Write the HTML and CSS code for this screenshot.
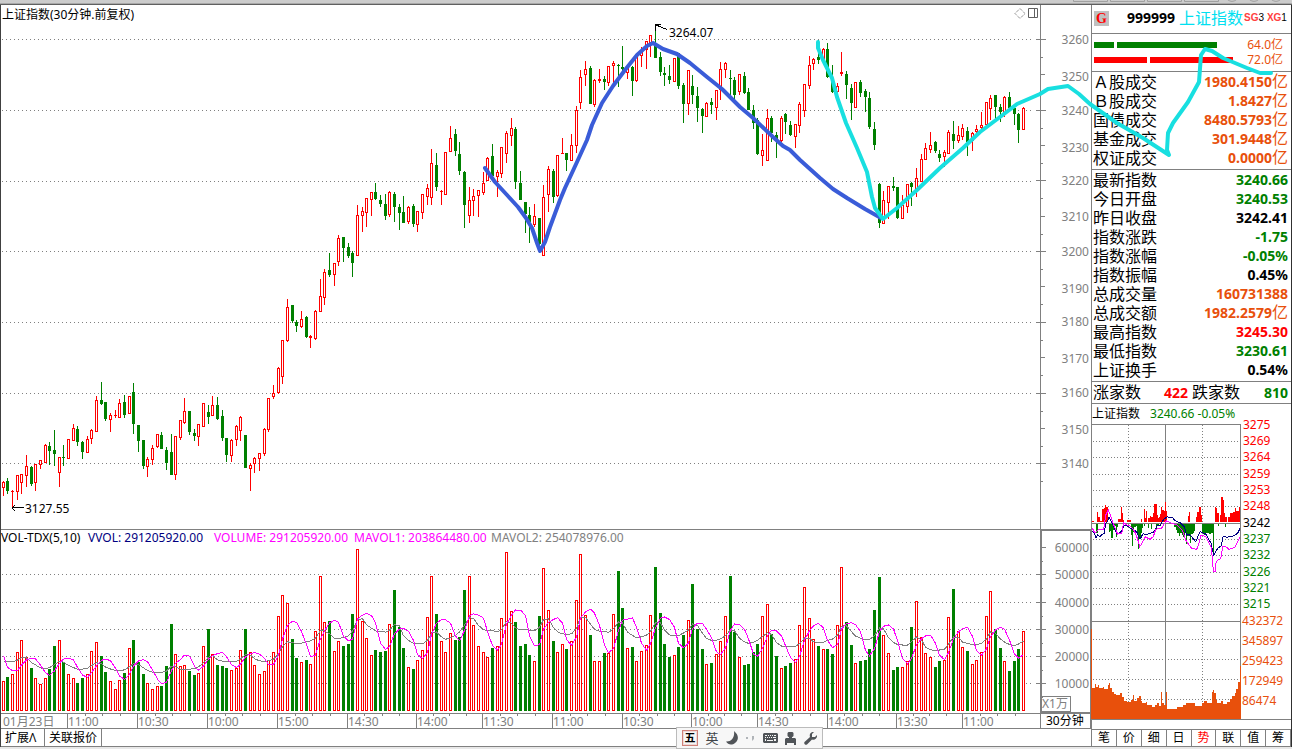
FILE: index.html
```html
<!DOCTYPE html>
<html lang="zh-CN">
<head>
<meta charset="utf-8">
<title>上证指数 30分钟</title>
<link rel="stylesheet" href="styles.css">
</head>
<body>
<div class="strip"></div>
<div class="app">
  <main class="main">
    <section class="panel">
      <svg class="chart" id="price" viewBox="1 5 1090 525"></svg>
      <header class="panel-head">
        <h1 class="title">上证指数(30分钟.前复权)</h1>
        <svg class="tools" viewBox="0 0 28 12"><path d="M1 6.500l5-5 5 5-5 5z" stroke-dasharray="1 1"/><path d="M14.500 1.500h9v9h-9zM20.500 1.500v9"/></svg>
      </header>
    </section>
    <section class="panel">
      <svg class="chart" id="volume" viewBox="1 530 1090 199"></svg>
      <div class="legend">
        <span>VOL-TDX(5,10)</span><span class="navy">VVOL: 291205920.00</span><span class="pink">VOLUME: 291205920.00</span><span class="pink">MAVOL1: 203864480.00</span><span class="gray">MAVOL2: 254078976.00</span>
      </div>
    </section>
    <footer class="foot"><button type="button">扩展Λ</button><button type="button">关联报价</button></footer>
  </main>
  <aside class="side">
    <div class="code"><span class="g">G</span><b class="num">999999</b><span class="name">上证指数</span><span class="tags"><b>SG</b>3 <b>XG</b>1</span></div>
    <div class="flow">
      <div class="flow-row"><span class="bar buy"></span><span class="bar buy long"></span><span class="amount">64.0亿</span></div>
      <div class="flow-row"><span class="bar sell"></span><span class="bar sell long"></span><span class="amount">72.0亿</span></div>
    </div>
    <table class="quotes">
      <tr><th scope="row">Ａ股成交</th><td class="orange">1980.4150<span>亿</span></td></tr>
      <tr><th scope="row">Ｂ股成交</th><td class="orange">1.8427<span>亿</span></td></tr>
      <tr><th scope="row">国债成交</th><td class="orange">8480.5793<span>亿</span></td></tr>
      <tr><th scope="row">基金成交</th><td class="orange">301.9448<span>亿</span></td></tr>
      <tr><th scope="row">权证成交</th><td class="orange">0.0000<span>亿</span></td></tr>
    </table>
    <table class="quotes">
      <tr><th scope="row">最新指数</th><td class="green">3240.66</td></tr>
      <tr><th scope="row">今日开盘</th><td class="green">3240.53</td></tr>
      <tr><th scope="row">昨日收盘</th><td>3242.41</td></tr>
      <tr><th scope="row">指数涨跌</th><td class="green">-1.75</td></tr>
      <tr><th scope="row">指数涨幅</th><td class="green">-0.05%</td></tr>
      <tr><th scope="row">指数振幅</th><td>0.45%</td></tr>
      <tr><th scope="row">总成交量</th><td class="orange">160731388</td></tr>
      <tr><th scope="row">总成交额</th><td class="orange">1982.2579<span>亿</span></td></tr>
      <tr><th scope="row">最高指数</th><td class="red">3245.30</td></tr>
      <tr><th scope="row">最低指数</th><td class="green">3230.61</td></tr>
      <tr><th scope="row">上证换手</th><td>0.54%</td></tr>
    </table>
    <div class="breadth"><span>涨家数</span><b class="red">422</b><span>跌家数</span><b class="green">810</b></div>
    <div class="mini-head"><span>上证指数</span><span class="green">3240.66 -0.05%</span></div>
    <svg class="chart" id="mini" viewBox="1092 424 199 296"></svg>
    <nav class="tabs"><button type="button">笔</button><button type="button">价</button><button type="button">细</button><button type="button">日</button><button type="button" class="red">势</button><button type="button">联</button><button type="button">值</button><button type="button">筹</button></nav>
  </aside>
  <div class="ime">
    <span class="wubi">五</span><span class="ying">英</span>
    <svg width="12" height="14" viewBox="0 0 12 14"><path d="M8 0C13 4 13 9 9 12 6 14.500 2 14 0 10.500 5 11 9 7 8 0z"/></svg>
    <svg width="10" height="8" viewBox="0 0 10 8"><path class="dim" d="M1 3h2v2H1zM7 2h2v3L7 7z"/></svg>
    <svg width="15" height="10" viewBox="0 0 15 10"><path fill-rule="evenodd" d="M1 0h13l1 1v8l-1 1H1L0 9V1zM2 2v1h2V2zm3 0v1h1V2zm2 0v1h1V2zm2 0v1h1V2zm2 0v1h2V2zM2 4v1h1V4zm2 0v1h1V4zm2 0v1h1V4zm2 0v1h1V4zm2 0v1h3V4zM2 6v2h1V6zm2 1v1h6V7zm7-1v2h2V6z"/></svg>
    <svg width="11" height="13" viewBox="0 0 11 13"><path d="M3.500 0h4l1 1v3l-1 1H7v1h3l1 1v6H9v-2H2v2H0V7l1-1h3V5h-.5l-1-1V1z"/></svg>
    <svg width="13" height="13" viewBox="0 0 13 13"><path d="M10 0L8 2v3h3l2-2c.5 3-2 5.500-5 4.500L3 12.500C1.500 13.500-.5 12 .5 10L6 5C5 2 7-.5 10 0z"/></svg>
  </div>
  <svg class="ink" viewBox="0 0 1292 749" preserveAspectRatio="none">
    <path class="cap" d="M1073.500 0v1.500h34V0M1110.500 0v1.500h34V0M1147.500 0v1.500h34V0M1184.500 0v1.500h34V0M1228 0q4 3 8 0M1250 0q4 3 8 0M1272 0q4 3 8 0"/>
    <path class="blue" d="M485 168L495 182 507 195 518 207 526 218 532 228 537 243 540 251 545 242 550 227 560 200 565 188 577 162 587 140 592 125 602 103 613 86 625 70 637 55 647 46 653 43 663 49 677 54 690 63 707 77 722 89 740 107 753 118 773 137 783 146 790 150 800 160 810 169 820 178 833 189 847 198 865 209 881 218"/>
    <path class="cyan" d="M818 42V48L823 60 832 78 837 97 846 123 857 148 867 172 872 197 875 208 883 219 897 208 917 190 940 168 963 148 980 132 1000 117 1017 104 1040 94 1048 89 1068 86 1079 94 1090 104 1117 123 1143 138 1169 155 1167 150 1168 133 1173 123 1188 102 1199 82 1201 55 1205 49 1212 51 1223 58 1247 68 1260 73H1271"/>
  </svg>
</div>
<script src="chart.js"></script>
</body>
</html>
```
FILE: styles.css
```css
* { box-sizing: border-box; }
body {
  margin: 0;
  background: #e8e8e8;
  color: #000;
  font: 12px/16px "Noto Sans", "Noto Sans CJK SC", sans-serif;
}
button {
  margin: 0;
  padding: 0;
  border: 0;
  background: #fff;
  color: #000;
  font: 12px/16px "Noto Sans", "Noto Sans CJK SC", sans-serif;
}
.strip { height: 5px; background: #ccc; border-bottom: 1px solid #606060; box-shadow: inset 0 -1px #a8a8a8; }
.app { display: flex; background: #fff; }
.main { flex: 1; min-width: 0; border-left: 1px solid #404040; }
.panel { display: grid; }
.panel > * { grid-area: 1 / 1; }
.chart { display: block; width: 100%; height: auto; shape-rendering: crispEdges; }
.chart text { font-size: 12px; fill: #808080; }
.chart .end { text-anchor: end; }
.panel-head { display: flex; justify-content: space-between; align-items: start; height: 20px; padding: 2px 49px 0 1px; }
.title { margin: 0; font-size: 12px; font-weight: 400; }
.tools { width: 28px; height: 12px; fill: none; stroke: #606060; }
.legend { display: grid; grid-template-columns: 87px 126px 140px 137px auto; height: 16px; white-space: nowrap; }
.foot { display: flex; height: 18px; border-bottom: 1px solid #808080; }
.foot button { padding: 0 4px; border-right: 1px solid #808080; }
.foot button:first-child { width: 44px; text-align: left; }
.line { fill: none; stroke: #808080; }
.dots { fill: none; stroke: #808080; stroke-dasharray: 1 3; }
.mini-dots { fill: none; stroke: #808080; stroke-dasharray: 1 2; }
.up { fill: #fff; stroke: #f00; }
.down { fill: none; stroke: #008000; }
.down-fill { fill: #008000; }
.up-fill { fill: #f00; }
.sell-area { fill: #e8500c; }
.ma { fill: none; stroke-width: 1; }
.ma-fast { stroke: #f0f; }
.ma-slow { stroke: #808080; }
.ma-navy { stroke: #000080; }
.arrow { fill: none; stroke: #000; }
.chart .ink-text { fill: #000; }
.chart .t-red { fill: #f00; }
.chart .t-green { fill: #008000; }
.chart .t-orange { fill: #e8500c; }

.side { width: 201px; border: solid #808080; border-width: 0 1px; border-right-color: #303030; }
.code, .flow, .quotes, .breadth { border-bottom: 1px solid #808080; }
.code { display: flex; align-items: center; height: 29px; padding: 0 2px 2px; white-space: nowrap; }
.g { width: 15px; height: 15px; margin-right: 18px; background: #c0c0c0; color: #f00; font: bold 14px/15px "Liberation Serif", serif; text-align: center; }
.num { font-size: 14px; }
.name { margin-left: 4px; color: #00e0f0; font-size: 16px; }
.tags { margin-left: 1px; font: 10px/16px "Liberation Sans", sans-serif; }
.tags b { color: #ff4040; }
.flow { height: 38px; padding: 3px 8px 0 2px; }
.flow-row { display: flex; align-items: center; gap: 3px; height: 15px; }
.bar { width: 20px; height: 6px; background: #008000; }
.bar.long { width: 100px; }
.bar.sell { width: 53px; background: #f00; }
.bar.sell.long { width: 83px; }
.amount { margin-left: auto; color: #e8500c; }
.quotes { width: 100%; border-collapse: separate; border-spacing: 0; padding: 1px 3px 1px 1px; }
.quotes th, .quotes td { height: 19px; padding: 0; line-height: 18px; white-space: nowrap; vertical-align: top; }
.quotes th { font-size: 16px; font-weight: 400; text-align: left; }
.quotes td { font-size: 14px; font-weight: 700; text-align: right; }
.quotes td span { font-size: 16px; font-weight: 400; line-height: 16px; }
.breadth { display: grid; grid-template-columns: 48px 43px 1fr auto; column-gap: 4px; height: 22px; padding: 0 3px 0 1px; font-size: 16px; line-height: 21px; }
.breadth b { font-size: 14px; text-align: right; }
.mini-head { display: flex; gap: 10px; height: 20px; padding-left: 0; line-height: 20px; white-space: nowrap; }
.tabs { display: grid; grid-template-columns: repeat(8, 1fr); height: 18px; margin-top: 9px; border: solid #808080; border-width: 1px 0; }
.tabs button { border-right: 1px solid #808080; font-size: 12px; }
.green { color: #008000; }
.red, .tabs .red { color: #f00; }
.orange { color: #e8500c; }
.navy { color: #000080; }
.pink { color: #f0f; }
.gray { color: #808080; }

.ime {
  position: absolute; left: 676px; top: 727px;
  display: flex; align-items: center; justify-content: space-between;
  width: 147px; height: 22px; padding: 0 5px;
  background: #f7f7f7; border: 1px solid #bbb; fill: #505458;
}
.ime .dim { fill: #b0b4b8; }
.wubi { width: 16px; height: 16px; border: 1px solid #d08078; box-shadow: inset 0 0 0 1px #eedad8; font-size: 11px; font-weight: 700; line-height: 14px; text-align: center; }
.ying { color: #404448; font-size: 13px; }
.ink { position: absolute; left: 0; top: 0; width: 100%; height: 749px; fill: none; stroke-linecap: round; stroke-linejoin: round; pointer-events: none; }
.blue { stroke: #3a5cd8; stroke-width: 4; }
.cyan { stroke: #18dfe0; stroke-width: 4; }
.cap { stroke: #a0a0a0; }
```
FILE: chart.js
```js
// One bar per entry: direction, high, body top, body bottom, low, volume.
const BARS = `r 481 482 488 496 89,g 478 481 491 494 101,r 490 491 492 507 112,r 475 475 492 500 176,r 474 474 483 494 214,r 455 466 476 487 163,g 466 467 484 486 128,r 464 464 483 491 100,r 460 460 465 469 82,r 444 445 463 463 100,
g 442 446 451 465 125,g 430 450 454 466 194,r 457 457 473 487 214,g 445 457 458 466 146,r 439 439 459 459 112,r 424 428 441 441 100,g 426 429 442 446 83,g 441 442 452 459 98,r 436 439 453 453 112,r 429 430 439 444 181,
r 396 400 432 432 206,g 382 400 404 405 164,g 402 402 419 421 116,r 413 415 420 432 89,r 410 415 416 418 65,r 399 403 418 418 92,g 395 402 415 418 113,r 396 396 414 414 190,g 383 392 424 434 212,g 425 425 441 452 146,
g 440 440 466 469 110,r 457 459 467 477 83,r 445 448 460 465 65,r 434 434 447 448 74,g 432 435 449 449 74,g 447 450 463 470 134,g 434 452 475 475 260,r 436 436 475 480 172,r 420 420 438 440 134,r 398 411 423 424 139,
g 411 411 432 435 119,g 429 433 436 441 107,r 424 424 437 446 113,r 403 403 427 427 194,g 405 412 417 424 245,r 396 405 416 416 172,g 397 405 419 420 137,g 410 416 438 441 134,g 438 438 455 462 128,r 439 440 456 462 124,
r 425 426 440 446 130,r 416 417 431 441 184,g 435 435 468 468 245,r 463 465 469 491 178,r 457 458 464 473 137,r 453 453 459 471 110,r 428 429 454 456 119,r 398 398 430 432 154,r 385 393 397 399 176,r 367 368 393 394 284,
r 340 340 377 384 349,r 299 307 341 342 323,g 305 305 321 323 215,g 320 322 326 332 158,r 311 319 327 328 148,g 316 317 337 338 152,r 335 336 338 348 142,r 310 311 339 340 239,r 279 296 312 312 404,r 269 272 298 305 266,
g 253 270 275 277 269,r 263 263 275 286 181,r 235 238 262 266 211,g 237 237 248 262 194,g 243 247 256 258 200,g 251 253 263 277 290,r 205 215 256 256 485,r 207 211 216 232 269,r 198 198 213 227 220,r 192 192 200 216 169,
g 183 192 199 200 182,g 195 200 204 207 176,g 194 204 216 220 179,r 191 192 215 217 260,g 192 194 207 222 362,g 204 207 213 230 251,g 196 212 223 223 188,r 206 207 222 224 133,g 204 206 224 227 125,r 211 211 225 232 154,
r 194 194 213 219 184,r 184 188 197 205 281,r 149 163 198 205 406,g 153 165 187 191 290,r 190 191 192 205 211,r 152 152 195 195 178,r 126 138 152 152 233,g 129 134 151 156 212,g 142 154 171 175 221,g 171 172 205 228 362,
r 187 200 216 223 404,r 189 196 201 216 257,r 190 190 196 217 194,r 172 183 193 195 176,r 157 158 181 181 163,g 144 156 176 176 188,r 170 172 177 197 196,r 147 147 174 178 278,r 131 133 154 163 476,r 118 128 136 146 299,
g 127 129 182 189 266,g 171 183 200 200 194,g 202 202 214 233 200,g 207 215 222 243 167,r 204 216 225 227 149,g 218 218 244 253 284,r 185 197 256 256 428,r 166 169 195 212 302,g 169 171 197 203 209,r 155 155 196 197 178,
r 138 153 154 154 202,g 153 153 160 171 185,r 134 145 161 161 209,r 106 110 146 153 334,r 70 77 103 109 470,r 61 69 75 86 287,g 66 68 104 104 227,r 79 80 105 107 149,r 69 79 81 83 151,g 76 79 82 90 173,
r 66 66 83 86 173,r 61 63 66 86 290,g 64 65 66 87 419,g 46 67 69 72 308,r 66 68 73 79 188,g 66 67 81 96 191,r 54 55 81 82 151,r 47 50 56 67 181,r 41 41 50 69 199,r 35 35 43 57 287,
g 24 45 58 58 431,g 52 57 72 76 293,g 67 73 75 86 200,g 65 76 80 84 161,r 58 58 82 82 169,g 53 53 86 89 191,g 83 85 104 123 227,r 70 70 104 115 273,g 75 86 95 104 381,g 87 96 108 122 246,
g 108 109 116 133 186,r 102 103 117 117 140,g 98 102 105 114 144,r 90 90 108 120 170,r 62 69 90 100 209,r 62 63 70 78 284,g 70 78 79 96 405,g 77 80 95 100 237,r 74 74 92 95 161,g 72 76 93 94 138,
g 88 92 110 110 141,g 105 110 123 129 177,g 118 120 154 155 201,r 134 150 156 166 284,r 109 118 161 161 320,g 116 118 133 142 231,g 132 135 140 158 165,r 116 118 141 142 128,g 113 114 122 134 135,g 121 125 135 136 144,
r 124 124 137 148 155,r 102 104 126 133 257,r 84 84 111 117 371,r 56 65 86 89 278,r 58 59 64 70 215,g 40 57 60 64 195,r 48 49 62 62 185,g 43 49 77 78 186,g 65 78 92 93 171,r 83 86 92 97 257,
r 52 72 74 76 431,g 71 74 85 99 267,g 84 88 103 120 198,r 82 82 108 108 143,g 80 82 93 97 150,g 89 91 97 112 153,g 92 98 127 129 186,g 122 129 145 150 303,g 183 184 223 228 402,r 191 200 224 224 227,
r 186 186 203 219 173,g 177 186 188 191 123,g 187 187 218 219 132,r 195 205 219 219 131,r 184 184 207 213 149,g 182 183 187 206 252,r 168 178 189 197 329,r 154 159 182 182 222,r 143 148 160 160 173,r 132 145 150 153 161,
g 141 142 151 153 132,g 150 154 158 162 150,r 150 152 157 167 153,r 130 132 154 154 281,g 121 134 141 149 366,r 126 135 141 143 240,r 124 128 137 140 191,g 127 131 142 156 180,r 132 133 141 151 140,r 125 129 132 133 152,
r 112 125 128 129 176,r 102 102 125 127 284,r 95 98 109 120 359,g 95 95 107 120 246,g 104 107 112 122 189,r 96 97 114 117 149,g 92 97 108 110 120,g 106 108 114 125 150,g 113 114 130 143 186,r 107 108 130 130 240`
  .split(",").map(row => {
    const [dir, ...n] = row.trim().split(" ");
    const [high, top, bottom, low, vol] = n.map(Number);
    return { up: dir === "r", high, top, bottom, low, vol };
  });
// Volumes just before the first visible bar, so the averages start complete.
const LEAD = [101, 112, 130, 140, 167, 275, 165, 172, 129];
const VOL_BASE = 711;
const VOL_UNITS = 3;
const barX = i => Math.floor(3.3 + i * 4.6585);

const path = (cls, d) => `<path class="${cls}" d="${d}"/>`;
const text = (x, y, s, cls = "") => `<text x="${x}" y="${y}" class="${cls}">${s}</text>`;

function box(x, top, bottom, up) {
  if (bottom - top < 2) return `M${x - 1} ${top + 0.5}h3`;
  return up ? `M${x - 0.5} ${top + 0.5}h2v${bottom - top - 1}h-2z` : `M${x - 1} ${top}h3v${bottom - top}h-3z`;
}

function drawPrice() {
  let out = "", up = "", down = "", wick = "", fill = "";
  for (const y of [39, 110, 181, 251, 322, 393, 463]) out += path("dots", `M2 ${y + 0.5}H1034`);
  BARS.forEach((b, i) => {
    const x = barX(i), c = x + 0.5;
    let w = "";
    if (b.high < b.top) w += `M${c} ${b.high}V${b.top}`;
    if (b.low > b.bottom) w += `M${c} ${b.bottom}V${b.low}`;
    if (b.up) up += w + box(x, b.top, b.bottom, true);
    else {
      wick += w;
      if (b.bottom - b.top < 2) down += box(x, b.top, b.bottom, false);
      else fill += box(x, b.top, b.bottom, false);
    }
  });
  out += path("up", up) + path("down", wick + down) + path("down-fill", fill);
  let axis = "M1040.5 5V530M1 529.5H1091";
  for (let k = 0; k < 13; k++) {
    const y = Math.round(39 + k * 35.35) + 0.5;
    axis += k % 2 ? `M1041 ${y}h4` : `M1036 ${y}h10`;
    axis += `M1041 ${y + 18}h2`;
  }
  out += path("line", axis);
  [40, 77, 111, 148, 181, 217, 252, 289, 322, 359, 393, 430, 464].forEach((y, k) => {
    out += text(1089, y + 4, 3260 - k * 10, "end");
  });
  out += text(25, 513, "3127.55", "ink-text") + text(669, 37, "3264.07", "ink-text");
  out += path("arrow", "M12 507.5H24M15 505L12 508 15 511M656 25L667 29.5M655.500 31V24.500H661");
  document.getElementById("price").innerHTML = out;
}

function average(n) {
  const all = LEAD.concat(BARS.map(b => b.vol));
  return BARS.map((b, i) => {
    const end = i + LEAD.length + 1;
    const mean = all.slice(end - n, end).reduce((s, v) => s + v, 0) / n;
    return `${i ? "L" : "M"}${barX(i) + 0.5} ${(VOL_BASE - mean / VOL_UNITS).toFixed(1)}`;
  }).join("");
}

function drawVolume() {
  let out = "", up = "", fill = "";
  for (const y of [574, 602, 629, 656, 683]) out += path("dots", `M2 ${y + 0.5}H1034`);
  BARS.forEach((b, i) => {
    const top = VOL_BASE - Math.round(b.vol / VOL_UNITS);
    if (b.up) up += box(barX(i), top, VOL_BASE, true);
    else fill += box(barX(i), top, VOL_BASE, false);
  });
  out += path("up", up) + path("down-fill", fill);
  out += path("ma ma-slow", average(10)) + path("ma ma-fast", average(5));
  let axis = "M1 713.5H1091M1 728.5H1091M1040.5 530V728M1041.5 530V713M1041 530.5H1091M1041 712.5H1091M1090.5 530V728M1041.5 696.5H1070.5V711.5H1041.5";
  [547, 574, 602, 629, 656, 683].forEach((y, k) => {
    axis += k ? `M1036 ${y + 0.5}h10` : `M1041 ${y + 0.5}h5`;
    axis += `M1041 ${y + 14.5}h2`;
    out += text(1089, y + 5, 60000 - k * 10000, "end");
  });
  const times = [[67, "11:00"], [137, "10:30"], [207, "10:00"], [277, "15:00"], [347, "14:30"], [416, "14:00"], [482, "11:30"],
    [552, "11:00"], [622, "10:30"], [691, "10:00"], [757, "14:30"], [827, "14:00"], [896, "13:30"], [962, "11:00"]];
  times.forEach(([x, label], k) => {
    axis += `M${x + 0.5} 713V728`;
    const next = k < times.length - 1 ? times[k + 1][0] : 1032;
    for (let j = 1; j < 4; j++) axis += `M${Math.round(x + (next - x) * j / 4) + 0.5} 713v3`;
    out += text(x + 1, 726, label);
  });
  out += text(3, 726, "01月23日") + text(1042, 708, "X1万") + text(1046, 725, "30分钟", "ink-text");
  document.getElementById("volume").innerHTML = out + path("line", axis);
}

// Column profile: x, top edge pairs; each column runs to the next x.
function columns(points, base, end) {
  let d = `M${points[0][0]} ${base}`;
  points.forEach(([x, y], i) => {
    d += `V${y}H${i < points.length - 1 ? points[i + 1][0] : end}`;
  });
  return d + `V${base}z`;
}
const pairs = s => s.split(" ").map(p => p.split(",").map(Number));

function drawMini() {
  let out = "", dots = "";
  for (const y of [441, 457, 474, 490, 506, 539, 555, 572, 588, 604, 639, 659, 679, 699]) dots += `M1093 ${y + 0.5}H1240`;
  dots += "M1128.5 425V719M1202.5 425V719";
  out += path("mini-dots", dots);
  out += path("line", "M1092 424.5H1240.5V719M1165.5 424V719M1092 621.5H1240M1092 719.5H1291");
  const red = pairs("22,362 28,367 36,336 39,352 46,364 52,327 57,325 60,315 63,322 69,367 99,358 107,320 111,340 114,360 117,367 126,360 138,367 168,358 172,367 177,327 180,355 183,334 186,367 190,355 195,347 198,352 204,340 208,312 215,345 218,355 221,352 224,342 228,320 231,330 237,332 240,307 243,332 246,367 309,347 312,335 315,367 333,352 336,335 342,322 348,345 351,367 390,322 393,325 396,340 402,367 405,345 409,292 414,300 417,340 420,352 426,367 429,352 435,340 445,335 451,325 453,332 459,332 462,320");
  const green = pairs("24,371 33,398 38,371 59,380 62,371 71,395 75,392 79,415 85,390 88,378 93,412 97,380 100,371 114,378 118,371 137,405 141,437 145,395 148,380 153,378 157,405 160,448 163,410 167,398 171,385 175,371 178,378 181,371 189,385 192,371 197,388 200,371 213,388 217,378 222,371 267,382 273,390 277,400 281,408 285,398 291,405 295,412 299,398 302,432 306,408 313,402 316,430 319,402 323,400 327,392 330,371 352,398 358,405 363,398 371,402 378,398 384,460 388,371 400,378 403,371 420,380 423,371");
  out += `<g transform="translate(1085 400) scale(.3333)">` + path("up-fill", columns(red, 367, 466)) + path("down-fill", columns(green, 371, 424)) + "</g>";
  out += path("line", "M1092 523.5H1240");
  const trace = (cls, s) => path(cls, "M" + pairs(s).map(([x, y]) => `${(1085 + x / 3).toFixed(1)} ${(400 + y / 3).toFixed(1)}`).join("L"));
  out += trace("ma ma-navy", "22,392 28,400 33,415 38,404 44,410 50,404 58,400 62,370 68,363 72,352 78,362 86,380 96,402 108,395 118,375 130,380 142,388 155,395 165,418 175,400 182,405 195,400 208,395 217,376 225,378 235,360 240,355 247,350 255,354 262,352 270,362 285,368 298,380 305,405 312,404 320,410 332,425 345,395 362,402 378,430 386,465 398,445 408,438 415,408 425,412 445,408 458,400 465,385");
  out += trace("ma ma-fast", "22,385 30,400 38,390 56,388 62,345 70,330 76,345 84,370 98,402 110,400 116,368 125,375 135,378 148,392 158,418 164,440 172,428 180,410 195,418 205,410 212,388 230,384 240,368 245,363 255,368 275,375 292,390 302,420 310,432 320,445 335,448 342,430 348,405 362,410 380,445 382,485 386,515 390,515 392,490 398,480 407,476 413,440 420,438 432,448 450,442 465,412");
  const money = pairs("184,297 187,475 195,462 198,472 205,465 208,475 218,470 221,478 235,465 238,460 241,474 245,485 252,492 258,495 269,488 275,500 283,512 290,516 303,510 308,495 313,512 322,505 328,499 332,512 337,520 348,516 352,525 365,530 375,525 382,518 388,528 393,487 397,520 402,525 407,487 410,538 420,536 442,532 460,526 468,520 481,518 495,528 515,520 522,514 530,518 541,520 547,485 550,480 553,490 557,510 562,520 572,514 578,522 590,516 600,508 607,498 614,488 619,476 624,456 630,407");
  out += `<g transform="translate(1030 530) scale(.3333)">` + path("sell-area", columns(money, 568, 633)) + "</g>";
  const labels = [[425, 3275], [441, 3269], [457, 3264], [474, 3259], [490, 3253], [506, 3248], [523, 3242], [539, 3237], [555, 3232], [572, 3226], [588, 3221], [604, 3215],
    [621, 432372], [641, 345897], [661, 259423], [681, 172949], [701, 86474]];
  labels.forEach(([y, v], k) => {
    out += text(k < 12 ? 1243 : 1242, y + 4, v, k < 6 ? "t-red" : k === 6 ? "ink-text" : k < 12 ? "t-green" : "t-orange");
  });
  const svg = document.getElementById("mini");
  svg.style.overflow = "visible";
  svg.innerHTML = out;
}

drawPrice();
drawVolume();
drawMini();
```
